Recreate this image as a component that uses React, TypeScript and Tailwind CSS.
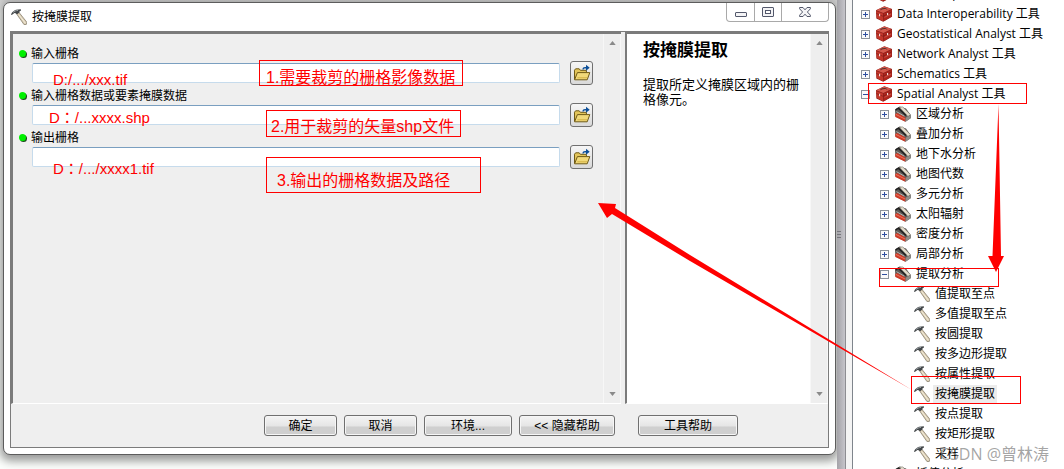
import React, { useState } from 'react';

type Field = {
  id: string;
  label: string;
};

const fields: Field[] = [
  { id: 'in-raster', label: '输入栅格' },
  { id: 'in-mask', label: '输入栅格数据或要素掩膜数据' },
  { id: 'out-raster', label: '输出栅格' },
];

type NodeKind = 'toolbox' | 'toolset' | 'tool';

type TreeNode = {
  name: string;
  kind: NodeKind;
  open?: boolean;
};

const nodes: TreeNode[] = [
  { name: 'Data Comparison 工具', kind: 'toolbox' },
  { name: 'Data Interoperability 工具', kind: 'toolbox' },
  { name: 'Geostatistical Analyst 工具', kind: 'toolbox' },
  { name: 'Network Analyst 工具', kind: 'toolbox' },
  { name: 'Schematics 工具', kind: 'toolbox' },
  { name: 'Spatial Analyst 工具', kind: 'toolbox', open: true },
  { name: '区域分析', kind: 'toolset' },
  { name: '叠加分析', kind: 'toolset' },
  { name: '地下水分析', kind: 'toolset' },
  { name: '地图代数', kind: 'toolset' },
  { name: '多元分析', kind: 'toolset' },
  { name: '太阳辐射', kind: 'toolset' },
  { name: '密度分析', kind: 'toolset' },
  { name: '局部分析', kind: 'toolset' },
  { name: '提取分析', kind: 'toolset', open: true },
  { name: '值提取至点', kind: 'tool' },
  { name: '多值提取至点', kind: 'tool' },
  { name: '按圆提取', kind: 'tool' },
  { name: '按多边形提取', kind: 'tool' },
  { name: '按属性提取', kind: 'tool' },
  { name: '按掩膜提取', kind: 'tool' },
  { name: '按点提取', kind: 'tool' },
  { name: '按矩形提取', kind: 'tool' },
  { name: '采样', kind: 'tool' },
  { name: '插值分析', kind: 'toolset' },
];

const indent: Record<NodeKind, string> = {
  toolbox: 'pl-2',
  toolset: 'pl-[27px]',
  tool: 'pl-[61px]',
};

const HammerIcon = () => (
  <svg width="16" height="16" viewBox="0 0 16 16" className="shrink-0" aria-hidden="true">
    <path d="M5.4 4.6 7.8 3.2 15.8 13.2 15.2 15.6 13 15.6Z" fill="#d9cdb4" stroke="#7c725f" strokeWidth=".7" />
    <path d="M7.6 5.6 14.4 14.2" stroke="#f6efde" strokeWidth="1" />
    <path d="M0 5.4C1 3.2 2.8 1.4 5 .8L9.8.3 10 1.5 8.4 2.4 8.5 3.6 6 5.2 4.6 4.2 3.4 3.9 1.8 5.2.6 6Z" fill="#43474a" />
    <path d="M2 3.5C3.4 2.2 4.8 1.6 7 1.4" stroke="#a5abae" strokeWidth=".9" fill="none" />
  </svg>
);

const ToolboxIcon = () => (
  <svg width="16" height="16" viewBox="0 0 16 16" className="shrink-0" aria-hidden="true">
    <path d="M0 4.3 8.3.3 16 3 16 10.8 7.2 15.8.4 12.4Z" fill="#8d1f19" />
    <path d="M.4 4.3 8.3.6 15.6 3.1 7.3 7Z" fill="#d4594c" />
    <path d="M.2 5 7 7.6 7.2 15.2.8 12Z" fill="#c2362b" />
    <path d="M7.8 7.6 15.8 3.8V10.5L7.8 15.2Z" fill="#ad261d" />
    <path d="M.4 7.5 7 10.3 15.8 5.8" stroke="#7a1813" strokeWidth=".6" fill="none" />
    <path d="M4.8 4.2 5.2 3 9.8 2.3 10.8 3.5" stroke="#4a2b28" strokeWidth=".9" fill="none" />
    <path d="M3.6 7.8V10.2M11.6 7V9.2" stroke="#f7e2de" strokeWidth="1.1" />
    <path d="M8.4 11.4 15 8" stroke="#dc6a5e" strokeWidth=".6" />
  </svg>
);

const ToolsetIcon = () => (
  <svg width="16" height="16" viewBox="0 0 16 16" className="shrink-0" aria-hidden="true">
    <path d="M0 3.4 4.6.4 11 2.4 16 9.4V12L10.5 15.8.4 10.4Z" fill="#5b5856" />
    <path d="M.2 8 2.4 7 10.6 11.6 10.4 15.8.4 11Z" fill="#cf3a27" />
    <path d="M10.6 11.8 15.8 8.8V12L10.4 15.8Z" fill="#8f8d89" />
    <path d="M.8 8.4 10 13" stroke="#f0866f" strokeWidth=".8" />
    <path d="M4.4 1.4 7.6.8 15.4 8.6 13 10.4Z" fill="#e2dccd" stroke="#6b6559" strokeWidth=".5" />
    <path d="M.6 3.8 3.4 2.2 11 9.6" stroke="#202020" strokeWidth="1.4" fill="none" />
    <path d="M1.4 5.6 9.4 10.2" stroke="#b7b5b0" strokeWidth="1" />
  </svg>
);

const FolderIcon = () => (
  <svg width="18" height="18" viewBox="0 0 18 18" aria-hidden="true">
    <path d="M1.5 15.5V6.2L2.6 4.8H6.2L7.4 6.3H13.4V8.5" fill="#e3c55a" stroke="#6f5a16" />
    <path d="M1.6 15.8 4.4 8.6H16.8L14.2 15.8Z" fill="#f1d979" stroke="#6f5a16" />
    <path d="M4.3 13.8H14" stroke="#d2b143" />
    <path d="M9.4 5.4C9.6 3.7 10.6 3 12 3H13V.7L16.7 3.7 13 6.7V4.6H12C11.1 4.6 10.8 4.9 10.7 5.6Z" fill="#0d4f98" />
  </svg>
);

const Expander = ({ open }: { open?: boolean }) => (
  <button
    aria-label={open ? '折叠' : '展开'}
    className="mr-[6px] h-[9px] w-[9px] shrink-0 border border-[#8c939b] bg-[#fafafa]"
  >
    <svg viewBox="0 0 7 7" className="block h-[7px] w-[7px]">
      <path d={open ? 'M1 3.5H6' : 'M1 3.5H6M3.5 1V6'} stroke="#2f4fa0" />
    </svg>
  </button>
);

const ScrollBar = () => (
  <div className="flex w-[18px] shrink-0 flex-col items-center justify-between border-x border-[#f7f7f7] bg-[#eeeeee] py-[7px]">
    <svg width="7" height="4" viewBox="0 0 8 5">
      <path d="M0 5 4 0 8 5Z" fill="#8a8a8a" />
    </svg>
    <svg width="7" height="4" viewBox="0 0 8 5">
      <path d="M0 0H8L4 5Z" fill="#8a8a8a" />
    </svg>
  </div>
);

const PushButton = ({ className, children }: { className: string; children: React.ReactNode }) => (
  <button
    className={`h-[21px] shrink-0 rounded-[3px] border border-[#707070] bg-linear-to-b from-[#f4f4f4] from-0% via-[#e6e6e6] via-50% to-[#cfcfcf] to-60% text-center leading-[18px] shadow-[inset_0_0_0_1px_#f6f6f6] ${className}`}
  >
    {children}
  </button>
);

// red call-out frame laid over the form or the tree
const Note = ({ className, children }: { className: string; children?: React.ReactNode }) => (
  <div className={`pointer-events-none absolute border border-[#ff0000] text-base leading-5 whitespace-nowrap text-[#ff0000] ${className}`}>
    {children}
  </div>
);

// the TC face keeps the full-width colon in the middle of its cell
const RedText = ({ className, children }: { className: string; children: React.ReactNode }) => (
  <span
    className={`pointer-events-none absolute font-['Liberation_Sans','Noto_Sans_CJK_TC',sans-serif] text-[15px] leading-5 whitespace-nowrap text-[#ff0000] ${className}`}
  >
    {children}
  </span>
);

const TitleBar = () => (
  <header className="flex h-7 shrink-0 items-start pr-[6px] pl-[7px]">
    <div className="flex h-7 flex-1 items-center gap-[5px]">
      <HammerIcon />
      <h1>按掩膜提取</h1>
    </div>
    <div className="flex h-[19px] rounded-b-[4px] border border-t-0 border-[#a9a9a9]">
      <button aria-label="最小化" className="flex w-7 items-center justify-center border-r border-[#a9a9a9]">
        <svg width="12" height="5" viewBox="0 0 12 5" className="mt-1">
          <rect x=".5" y=".5" width="11" height="4" rx=".5" fill="#f4f4f6" stroke="#53586b" />
        </svg>
      </button>
      <button aria-label="最大化" className="flex w-[27px] items-center justify-center border-r border-[#a9a9a9]">
        <svg width="12" height="10" viewBox="0 0 12 10">
          <rect x=".5" y=".5" width="11" height="9" rx=".5" fill="#f4f4f6" stroke="#53586b" />
          <rect x="3.5" y="3.5" width="5" height="3" fill="#fff" stroke="#53586b" />
        </svg>
      </button>
      <button aria-label="关闭" className="flex w-[46px] items-center justify-center">
        <svg width="12" height="10" viewBox="0 0 12 10">
          <path d="M.6.5H4L6 2.8 8 .5H11.4V1.8L8.4 5 11.4 8.2V9.5H8L6 7.2 4 9.5H.6V8.2L3.6 5 .6 1.8Z" fill="#f4f4f6" stroke="#53586b" />
        </svg>
      </button>
    </div>
  </header>
);

const ToolForm = () => {
  const [values, setValues] = useState<Record<string, string>>({});

  return (
    <section className="relative flex min-w-0 flex-1 border-t-2 border-l-2 border-[#7b7b7b] border-b border-b-white">
      <form className="min-w-0 flex-1 py-2 pl-[6px]">
        {fields.map((f) => (
          <div key={f.id} className="pt-px">
            <div className="flex h-[18px] items-center gap-1 pt-[3px]">
              <span className="h-[7px] w-[7px] rounded-full bg-[#00f000] shadow-[1px_1px_0_#1c4a1c]" />
              <label htmlFor={f.id} className="pl-px">{f.label}</label>
            </div>
            <div className="flex h-[23px] items-center gap-[10px] pr-[10px] pl-[13px]">
              <input
                id={f.id}
                type="text"
                value={values[f.id] ?? ''}
                onChange={(e) => setValues({ ...values, [f.id]: e.target.value })}
                className="h-5 min-w-0 flex-1 rounded-[2px] border border-[#c6dbec] border-t-[#7a9fc0] bg-white px-1 outline-none"
              />
              <button
                type="button"
                aria-label="浏览"
                className="flex h-6 w-[23px] items-center justify-center rounded-[3px] border border-[#707070] bg-linear-to-b from-[#f6f6f6] to-[#d9d9d9]"
              >
                <FolderIcon />
              </button>
            </div>
          </div>
        ))}
      </form>
      <ScrollBar />

      <RedText className="top-9 left-10">D:/.../xxx.tif</RedText>
      <RedText className="top-[74px] left-9">D：/...xxxx.shp</RedText>
      <RedText className="top-[125px] left-10">D：/.../xxxx1.tif</RedText>
      <Note className="top-[26px] left-[246px] h-[26px] w-[204px] pt-[7px] pl-[6px]">1.需要裁剪的栅格影像数据</Note>
      <Note className="top-[76px] left-[253px] h-[27px] w-[195px] pt-[6px] pl-1">2.用于裁剪的矢量shp文件</Note>
      <Note className="top-[123px] left-[253px] h-9 w-[215px] pt-[13px] pl-[10px]">3.输出的栅格数据及路径</Note>
    </section>
  );
};

const ToolDialog = () => (
  <main className="flex min-w-0 flex-1 flex-col rounded-[7px] border border-[#5c5c5c] bg-white shadow-[0_3px_10px_3px_rgba(0,0,0,0.4)]">
    <TitleBar />
    <div className="mx-[6px] mb-[6px] flex min-h-0 flex-1 flex-col border border-[#7b7b7b] bg-[#efefef]">
      <div className="flex min-h-0 flex-1">
        <ToolForm />
        <aside className="ml-1 flex w-[203px] shrink-0 border-t-2 border-l-2 border-[#7b7b7b] border-b border-b-white bg-white">
          <div className="flex-1 pt-[7px] pr-[6px] pl-4">
            <h2 className="text-[17px] leading-5 font-bold">按掩膜提取</h2>
            <p className="mt-4 text-[13px] leading-[15px]">提取所定义掩膜区域内的栅格像元。</p>
          </div>
          <ScrollBar />
        </aside>
      </div>
      <footer className="flex h-[43px] shrink-0 items-center">
        <div className="flex flex-1 justify-end gap-[7px] pr-[23px]">
          <PushButton className="w-[73px]">确定</PushButton>
          <PushButton className="w-[73px]">取消</PushButton>
          <PushButton className="w-[88px]">环境...</PushButton>
          <PushButton className="w-[96px]">&lt;&lt; 隐藏帮助</PushButton>
        </div>
        <div className="w-[190px]">
          <PushButton className="w-[100px]">工具帮助</PushButton>
        </div>
      </footer>
    </div>
  </main>
);

const ToolTree = () => (
  <nav className="relative w-[212px] shrink-0 overflow-hidden border-l border-[#7f858c] bg-white">
    <ul className="-mt-4">
      {nodes.map((n) => (
        <li key={n.name} className={`flex h-5 items-center whitespace-nowrap ${indent[n.kind]}`}>
          {n.kind !== 'tool' && <Expander open={n.open} />}
          {n.kind === 'toolbox' && <ToolboxIcon />}
          {n.kind === 'toolset' && <ToolsetIcon />}
          {n.kind === 'tool' && <HammerIcon />}
          <span className={`ml-[3px] px-[2px] leading-[18px] ${n.name === '按掩膜提取' ? 'bg-[#ececec]' : ''}`}>{n.name}</span>
        </li>
      ))}
    </ul>
    <Note className="top-[83px] left-[15px] h-[21px] w-[159px]" />
    <Note className="top-[268px] left-[26px] h-[19px] w-[120px]" />
    <Note className="top-[376px] left-[58px] h-7 w-[110px]" />
    <span className="absolute right-[15px] bottom-[3px] text-base leading-6 text-[#7d7d7d]/70">CSDN @曾林涛</span>
  </nav>
);

export default function App() {
  return (
    <div className="relative flex h-screen overflow-hidden bg-[#fafcfa] font-['Open_Sans','Noto_Sans_CJK_SC',sans-serif] text-xs text-black">
      <div className="flex min-w-0 flex-1 bg-linear-to-b from-[#d2d2d2] from-0% to-[#fcfefc] to-3% pt-[2px] pr-4 pb-[14px] pl-[3px] font-['Liberation_Sans','Noto_Sans_CJK_SC',sans-serif]">
        <ToolDialog />
      </div>

      {/* splitter between the dialog and the toolbox tree */}
      <div className="absolute inset-y-0 right-[212px] flex w-[15px] items-center bg-linear-to-r from-[#a4a3a8] to-[#c3c2c8] to-50%">
        <div className="h-[7px] w-1 border-y border-[#77777d]">
          <div className="mt-[2px] h-px bg-[#77777d]" />
        </div>
        <div className="ml-auto h-full w-[7px] border-l border-[#8d8d92] bg-[#f4f4f4]" />
      </div>
      <ToolTree />

      <svg
        width="1064"
        height="469"
        viewBox="0 0 1064 469"
        className="pointer-events-none absolute top-0 right-0"
        aria-hidden="true"
      >
        <path d="M998.5 104 1001 256H1004L996 272 988 256H992.5Z" fill="#ff0000" />
        <path d="M598 203 616 204 615 208 690 255 912 390 690 261 612 214 607 218Z" fill="#ff0000" />
      </svg>
    </div>
  );
}
